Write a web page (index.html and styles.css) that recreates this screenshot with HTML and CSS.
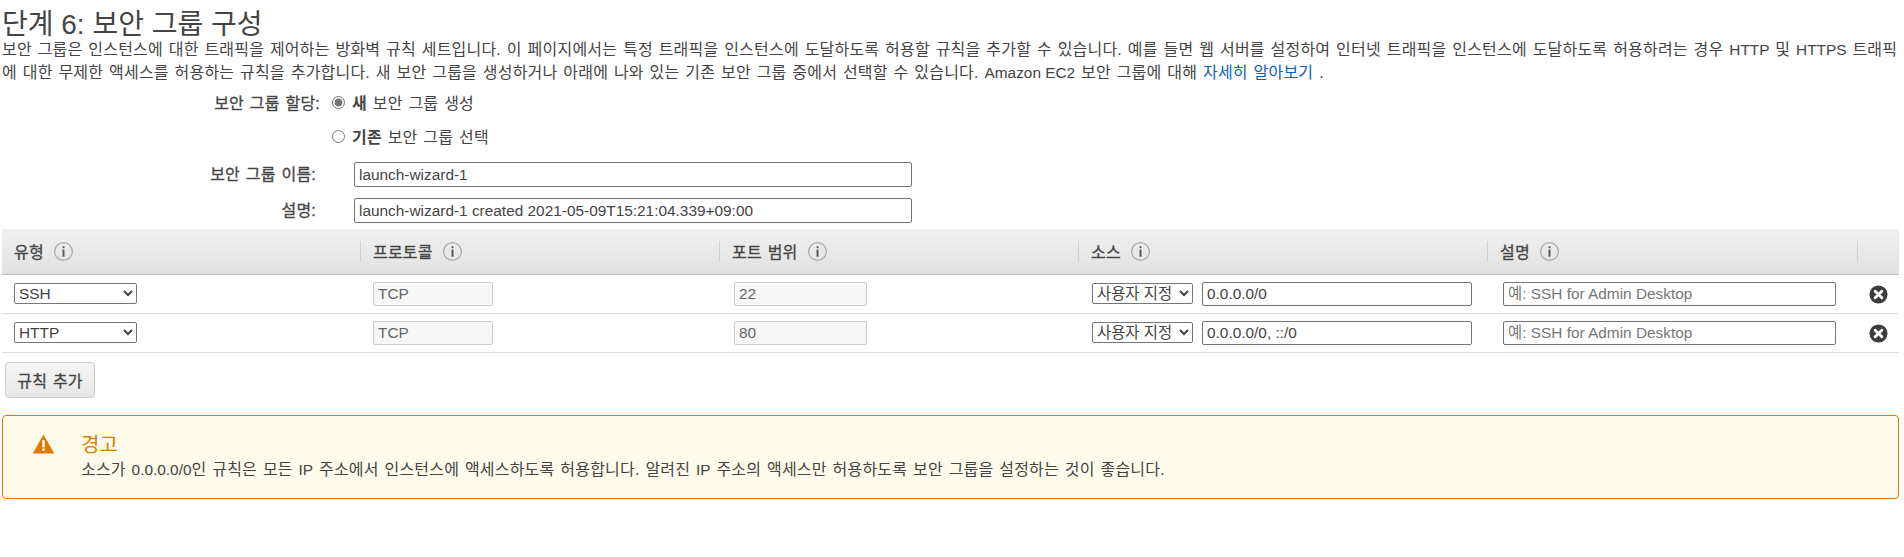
FILE: index.html
```html
<!DOCTYPE html>
<html lang="ko">
<head>
<meta charset="utf-8">
<title>보안 그룹 구성</title>
<link rel="stylesheet" href="styles.css">
</head>
<body>
<h1 class="title">단계 6: 보안 그룹 구성</h1>
<p class="intro">보안 그룹은 인스턴스에 대한 트래픽을 제어하는 방화벽 규칙 세트입니다. 이 페이지에서는 특정 트래픽을 인스턴스에 도달하도록 허용할 규칙을 추가할 수 있습니다. 예를 들면 웹 서버를 설정하여 인터넷 트래픽을 인스턴스에 도달하도록 허용하려는 경우 <span class="en">HTTP</span> 및 <span class="en">HTTPS</span> 트래픽<br>에 대한 무제한 액세스를 허용하는 규칙을 추가합니다. 새 보안 그룹을 생성하거나 아래에 나와 있는 기존 보안 그룹 중에서 선택할 수 있습니다. <span class="en">Amazon EC2</span> 보안 그룹에 대해 <a class="link" href="#">자세히 알아보기</a> .</p>

<div class="assign">
  <div class="assign-label">보안 그룹 할당:</div>
  <div class="assign-options">
    <label class="radio-row"><input class="radio" type="radio" name="sg" checked><span><b>새</b> 보안 그룹 생성</span></label>
    <label class="radio-row"><input class="radio" type="radio" name="sg"><span><b>기존</b> 보안 그룹 선택</span></label>
  </div>
</div>

<div class="field first">
  <label class="field-label">보안 그룹 이름:</label>
  <input class="text field-input" type="text" value="launch-wizard-1">
</div>
<div class="field">
  <label class="field-label">설명:</label>
  <input class="text field-input" type="text" value="launch-wizard-1 created 2021-05-09T15:21:04.339+09:00">
</div>

<table class="rules">
  <colgroup>
    <col class="c1"><col class="c2"><col class="c3"><col class="c4"><col class="c5"><col class="c6">
  </colgroup>
  <thead>
    <tr>
      <th><span class="th-in">유형<svg class="info" viewBox="0 0 20 20"><circle cx="10" cy="10" r="9.3"/><rect x="9" y="4.5" width="2" height="2"/><rect x="9" y="8" width="2" height="7.5"/></svg></span></th>
      <th><span class="th-in sep">프로토콜<svg class="info" viewBox="0 0 20 20"><circle cx="10" cy="10" r="9.3"/><rect x="9" y="4.5" width="2" height="2"/><rect x="9" y="8" width="2" height="7.5"/></svg></span></th>
      <th><span class="th-in sep">포트 범위<svg class="info" viewBox="0 0 20 20"><circle cx="10" cy="10" r="9.3"/><rect x="9" y="4.5" width="2" height="2"/><rect x="9" y="8" width="2" height="7.5"/></svg></span></th>
      <th><span class="th-in sep">소스<svg class="info" viewBox="0 0 20 20"><circle cx="10" cy="10" r="9.3"/><rect x="9" y="4.5" width="2" height="2"/><rect x="9" y="8" width="2" height="7.5"/></svg></span></th>
      <th><span class="th-in sep">설명<svg class="info" viewBox="0 0 20 20"><circle cx="10" cy="10" r="9.3"/><rect x="9" y="4.5" width="2" height="2"/><rect x="9" y="8" width="2" height="7.5"/></svg></span></th>
      <th><span class="th-in sep">&nbsp;</span></th>
    </tr>
  </thead>
  <tbody>
    <tr>
      <td><select class="sel type"><option>SSH</option></select></td>
      <td><input class="text ro proto" type="text" value="TCP" readonly></td>
      <td><input class="text ro port" type="text" value="22" readonly></td>
      <td><div class="source"><select class="sel src"><option>사용자 지정</option></select><input class="text cidr" type="text" value="0.0.0.0/0"></div></td>
      <td><input class="text desc" type="text" placeholder="예: SSH for Admin Desktop"></td>
      <td><svg class="del" viewBox="0 0 20 20"><circle cx="10" cy="10" r="9.5"/><path d="M6.5 6.5l7 7M13.5 6.5l-7 7"/></svg></td>
    </tr>
    <tr>
      <td><select class="sel type"><option>HTTP</option></select></td>
      <td><input class="text ro proto" type="text" value="TCP" readonly></td>
      <td><input class="text ro port" type="text" value="80" readonly></td>
      <td><div class="source"><select class="sel src"><option>사용자 지정</option></select><input class="text cidr" type="text" value="0.0.0.0/0, ::/0"></div></td>
      <td><input class="text desc" type="text" placeholder="예: SSH for Admin Desktop"></td>
      <td><svg class="del" viewBox="0 0 20 20"><circle cx="10" cy="10" r="9.5"/><path d="M6.5 6.5l7 7M13.5 6.5l-7 7"/></svg></td>
    </tr>
  </tbody>
</table>

<button class="add" type="button">규칙 추가</button>

<div class="alert">
  <svg class="warn" viewBox="0 0 22 20"><path d="M11 1 21.5 19.5H.5Z" fill="#df7a00" stroke="#df7a00" stroke-linejoin="round"/><rect x="9.7" y="6" width="2.6" height="7.5" fill="#fff"/><rect x="9.7" y="14.7" width="2.6" height="2.6" fill="#fff"/></svg>
  <div class="alert-body">
    <div class="alert-title">경고</div>
    <div class="alert-text">소스가 <span class="en">0.0.0.0/0</span>인 규칙은 모든 <span class="en">IP</span> 주소에서 인스턴스에 액세스하도록 허용합니다. 알려진 <span class="en">IP</span> 주소의 액세스만 허용하도록 보안 그룹을 설정하는 것이 좋습니다.</div>
  </div>
</div>
</body>
</html>
```

FILE: styles.css
```css
* { box-sizing: border-box; }
html, body { margin: 0; padding: 0; background: #fff; }
body {
  font-family: "Liberation Sans", "Noto Sans CJK KR", sans-serif;
  font-size: 16px;
  letter-spacing: .2px;
  word-spacing: 1.2px;
  color: #444;
}
.en { font-size: 15.4px; letter-spacing: 0; word-spacing: 0; }
.title {
  margin: 0;
  padding: 10px 0 0 2px;
  height: 38px;
  font-size: 28px;
  line-height: 30px;
  font-weight: 400;
  letter-spacing: 0;
  word-spacing: 0;
}
.intro {
  margin: 0;
  padding: 0 2px;
  font-size: 16px;
  line-height: 23px;
  white-space: nowrap;
}
.link { color: #0b5ebd; text-decoration: none; }
.assign { display: flex; margin-top: 1px; }
.assign-label {
  width: 320px;
  text-align: right;
  -webkit-text-stroke: .3px #444;
  line-height: 34px;
  padding-top: 2px;
}
.assign-options { display: flex; flex-direction: column; padding-left: 12px; }
.radio-row { display: flex; align-items: center; height: 34px; gap: 7px; }
.radio-row b { font-weight: 700; }
.radio { margin: 0; width: 13px; height: 13px; accent-color: #767676; }
.field { display: flex; align-items: center; height: 25px; margin-top: 11px; }
.field.first { margin-top: 9px; }
.field-label {
  width: 316px;
  padding-bottom: 3px;
  text-align: right;
  -webkit-text-stroke: .3px #444;
}
.text {
  height: 24px;
  padding: 0 4px;
  font: 15.4px "Liberation Sans", "Noto Sans CJK KR", sans-serif;
  color: #444;
  border: 1px solid #767676;
  border-radius: 2px;
  background: #fff;
}
.field-input { width: 558px; height: 25px; margin-left: 38px; }
.rules {
  width: 1897px;
  margin: 6px 0 0 2px;
  border-collapse: collapse;
  table-layout: fixed;
}
.c1 { width: 358px; }
.c2, .c3 { width: 359px; }
.c4 { width: 409px; }
.c5 { width: 370px; }
.c6 { width: 42px; }
.rules th {
  height: 45px;
  padding: 0;
  text-align: left;
  font-weight: 400;
  -webkit-text-stroke: .3px #444;
  font-size: 16px;
  background: linear-gradient(#f0f0f0, #e2e2e2);
  border-bottom: 1px solid #bbb;
}
.th-in {
  display: flex;
  align-items: center;
  gap: 10px;
  height: 21px;
  padding-left: 12px;
}
.th-in.sep { border-left: 1px solid #d0d0d0; }
.info { width: 19px; height: 19px; -webkit-text-stroke: 0; }
.info circle { fill: none; stroke: #aaa; stroke-width: 1.3; }
.info rect { fill: #555; }
.rules td { height: 39px; padding: 0; border-bottom: 1px solid #ddd; }
.rules td:first-child { padding-left: 12px; }
.rules td:nth-child(2) { padding-left: 13px; }
.rules td:nth-child(3) { padding-left: 15px; }
.rules td:nth-child(4) { padding-left: 14px; }
.rules td:nth-child(5) { padding-left: 16px; }
.rules td:nth-child(6) { padding-left: 12px; }
.sel {
  height: 21px;
  font: 15.4px "Liberation Sans", "Noto Sans CJK KR", sans-serif;
  color: #444;
  background: #fff;
  border: 1px solid #767676;
  border-radius: 2px;
  display: block;
}
.type { width: 123px; }
.src { width: 101px; }
.ro { background: #f7f7f7; border-color: #ccc; color: #666; display: block; }
.proto { width: 120px; }
.port { width: 133px; }
.source { display: flex; align-items: center; gap: 9px; }
.cidr { width: 270px; }
.desc { width: 333px; display: block; }
.desc::placeholder { color: #777; opacity: 1; }
.del { display: block; width: 19px; height: 19px; margin-top: 1px; }
.del circle { fill: #3d3d3d; }
.del path { stroke: #fff; stroke-width: 3; stroke-linecap: round; fill: none; }
.add {
  display: block;
  width: 90px;
  height: 36px;
  margin: 9px 0 0 5px;
  padding: 0;
  font: 400 16px "Liberation Sans", "Noto Sans CJK KR", sans-serif;
  -webkit-text-stroke: .3px #444;
  letter-spacing: .2px;
  word-spacing: 1.2px;
  color: #444;
  background: linear-gradient(#f6f6f6, #e6e6e6);
  border: 1px solid #ccc;
  border-radius: 4px;
}
.alert {
  display: flex;
  width: 1897px;
  height: 84px;
  margin: 17px 0 0 2px;
  padding: 18px 0 0 30px;
  background: #fffbea;
  border: 1px solid #df7a00;
  border-radius: 4px;
}
.warn { width: 21px; height: 20px; flex: none; }
.alert-body { margin-left: 27px; }
.alert-title { font-size: 20px; line-height: 22px; color: #df7a00; letter-spacing: 0; }
.alert-text { font-size: 16px; line-height: 28px; }
```
